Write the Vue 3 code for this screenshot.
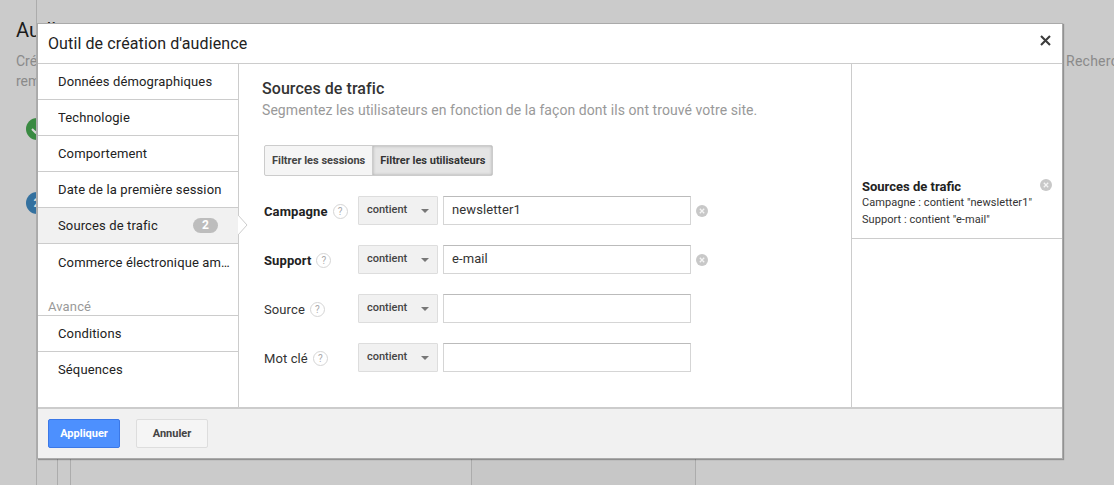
<script setup>
const menu = [
  { label: 'Données démographiques' },
  { label: 'Technologie' },
  { label: 'Comportement' },
  { label: 'Date de la première session' },
  { label: 'Sources de trafic', count: 2, active: true },
  { label: 'Commerce électronique amélioré' },
]
const advanced = ['Conditions', 'Séquences']
const rows = [
  { label: 'Campagne', value: 'newsletter1', bold: true, clear: true },
  { label: 'Support', value: 'e-mail', bold: true, clear: true },
  { label: 'Source', value: '' },
  { label: 'Mot clé', value: '' },
]
</script>

<template>
  <div class="page">
    <div class="backdrop">
      <h1 class="page-title">Audiences</h1>
      <p class="page-line">Créez des audiences <span class="far">Recherche</span></p>
      <p class="page-line second">remarketing</p>
      <div class="step green"><svg width="22" height="22" viewBox="0 0 22 22"><path d="M6 11l3.5 3.5L16 8" fill="none" stroke="#d8d8d8" stroke-width="2"/></svg></div>
      <div class="step blue">2</div>
      <div class="grid-lines">
        <i class="gl a"></i><i class="gl b"></i><i class="gl c"></i><i class="gl d"></i>
      </div>
    </div>

    <section class="modal">
      <header class="modal-head">
        <span class="modal-title">Outil de création d'audience</span>
        <svg class="close" width="11" height="11" viewBox="0 0 11 11"><path d="M1 1l9 9M10 1l-9 9" stroke="#3c3c3c" stroke-width="2.1" fill="none"/></svg>
      </header>

      <div class="modal-body">
        <nav class="side">
          <div v-for="m in menu" :key="m.label" class="side-item" :class="{ active: m.active }">
            <span class="side-label">{{ m.label }}</span>
            <span v-if="m.count" class="count">{{ m.count }}</span>
            <svg v-if="m.active" class="notch" width="10" height="20" viewBox="0 0 10 20"><path d="M0 0l9 10l-9 10z" fill="#fff"/><path d="M0 0l9 10l-9 10" fill="none" stroke="#ccc"/></svg>
          </div>
          <div class="side-heading">Avancé</div>
          <div v-for="a in advanced" :key="a" class="side-item adv">
            <span class="side-label">{{ a }}</span>
          </div>
        </nav>

        <main class="content">
          <h2 class="content-title">Sources de trafic</h2>
          <p class="content-sub">Segmentez les utilisateurs en fonction de la façon dont ils ont trouvé votre site.</p>

          <div class="toggle">
            <span class="tg">Filtrer les sessions</span>
            <span class="tg on">Filtrer les utilisateurs</span>
          </div>

          <div class="rows">
            <div v-for="r in rows" :key="r.label" class="row">
              <div class="row-label" :class="{ bold: r.bold }">
                <span>{{ r.label }}</span>
                <span class="help">?</span>
              </div>
              <div class="select"><span>contient</span><i class="caret"></i></div>
              <div class="input">{{ r.value }}</div>
              <svg v-if="r.clear" class="clear" width="12" height="12" viewBox="0 0 12 12"><circle cx="6" cy="6" r="6" fill="#c8c8c8"/><path d="M3.8 3.8l4.4 4.4M8.2 3.8l-4.4 4.4" stroke="#f4f4f4" stroke-width="1.3"/></svg>
            </div>
          </div>
        </main>

        <aside class="summary">
          <div class="sum-card">
            <div class="sum-title">Sources de trafic</div>
            <svg class="sum-clear" width="12" height="12" viewBox="0 0 12 12"><circle cx="6" cy="6" r="6" fill="#c8c8c8"/><path d="M3.8 3.8l4.4 4.4M8.2 3.8l-4.4 4.4" stroke="#f4f4f4" stroke-width="1.3"/></svg>
            <div class="sum-line">Campagne : contient "newsletter1"</div>
            <div class="sum-line">Support : contient "e-mail"</div>
          </div>
        </aside>
      </div>

      <footer class="modal-foot">
        <button class="btn primary">Appliquer</button>
        <button class="btn">Annuler</button>
      </footer>
    </section>
  </div>
</template>

<style>
html, body { margin: 0; background: #cbcbcb; overflow: hidden; }
</style>

<style scoped>
.page {
  position: relative;
  width: 1114px;
  height: 485px;
  overflow: hidden;
  background: #cbcbcb;
  font-family: Roboto, "Liberation Sans", sans-serif;
  color: #222;
}
.backdrop { padding: 18px 16px 0; }
.page-title { margin: 0; font-size: 20px; font-weight: 400; line-height: 24px; color: #1b1b1b; }
.page-line { margin: 9px 0 0; font-size: 14px; line-height: 20px; color: #8a8a8a; white-space: nowrap; position: relative; }
.page-line.second { margin-top: 0; }
.far { position: absolute; left: 1050px; top: 0; letter-spacing: .25px; }
.step { position: absolute; left: 26px; width: 22px; height: 22px; border-radius: 50%; color: #ddd; font-size: 12px; font-weight: 700; text-align: center; line-height: 22px; }
.green { top: 118px; background: #3a8a42; }
.blue { top: 192px; background: #34719f; }
.gl { position: absolute; top: 458px; bottom: 0; width: 1px; background: #acacac; }
.gl.a { left: 36px; top: 0; }
.gl.b { left: 57px; }
.gl.c { left: 70px; }
.gl.d { left: 471px; width: 223px; background: #c7c7c7; border-left: 1px solid #acacac; border-right: 1px solid #acacac; }

.modal {
  position: absolute;
  left: 38px;
  top: 24px;
  width: 1024px;
  height: 434px;
  background: #fff;
  box-shadow: 0 0 0 1px #aaa, 1px 1px 1px 1px rgba(0, 0, 0, .28);
  display: flex;
  flex-direction: column;
}
.modal-head {
  height: 40px;
  flex: none;
  box-sizing: border-box;
  display: flex;
  align-items: center;
  justify-content: space-between;
  padding: 0 11px 0 10px;
  border-bottom: 1px solid #ccc;
}
.modal-title { font-size: 16px; letter-spacing: .11px; color: #222; }
.close { margin-top: -7px; }
.modal-body { flex: 1; display: flex; min-height: 0; }

.side { width: 201px; flex: none; box-sizing: border-box; border-right: 1px solid #ccc; }
.side-item {
  position: relative;
  height: 36px;
  box-sizing: border-box;
  display: flex;
  align-items: center;
  padding: 0 7px 0 20px;
  border-bottom: 1px solid #ccc;
  font-size: 13px;
  letter-spacing: .13px;
  color: #222;
}
.side-item:nth-child(6) { border-bottom: 0; }
.side-item.adv:last-child { border-bottom-color: transparent; }
.side-item.active { background: #f1f1f1; }
.side-label { flex: 1; overflow: hidden; white-space: nowrap; text-overflow: ellipsis; }
.count { width: 25px; height: 15px; margin-right: 13px; border-radius: 8px; background: #bdbdbd; color: #fff; font-size: 12px; font-weight: 700; text-align: center; line-height: 15px; }
.notch { position: absolute; right: -10px; top: 7px; }
.side-heading { height: 21px; box-sizing: border-box; margin-top: 15px; padding: 4px 0 0 10px; font-size: 13px; letter-spacing: .13px; line-height: 16px; color: #999; border-bottom: 1px solid #ccc; }

.content { flex: 1; padding: 15px 23px 0; min-width: 0; }
.content-title { margin: 0; font-size: 16px; line-height: 20px; font-weight: 500; letter-spacing: .06px; color: #333; }
.content-sub { margin: 2px 0 0; font-size: 14px; line-height: 18px; letter-spacing: .065px; color: #999; }
.toggle { display: inline-flex; margin: 26px 0 0 2px; height: 31px; box-sizing: border-box; border: 1px solid #ccc; border-radius: 2px; background: #f5f5f5; }
.tg { padding: 0 7px; font-size: 11px; font-weight: 700; line-height: 29px; color: #444; }
.tg.on { background: #e4e4e4; box-shadow: inset 0 0 3px #aaa; color: #333; padding: 0 7px; border-left: 1px solid #ccc; }
.rows { margin-top: 20px; display: flex; flex-direction: column; gap: 20px; }
.row { display: flex; align-items: center; height: 29px; position: relative; }
.row-label { width: 94px; margin-left: 2px; padding-top: 2px; flex: none; display: flex; align-items: center; gap: 5px; font-size: 13px; letter-spacing: .1px; color: #333; }
.row-label.bold { font-weight: 700; color: #222; }
.help { width: 13px; height: 13px; border: 1px solid #d5d5d5; border-radius: 50%; font-size: 10px; font-weight: 400; line-height: 13px; text-align: center; color: #aaa; letter-spacing: 0; }
.select { width: 80px; height: 29px; box-sizing: border-box; border: 1px solid #ddd; background: #f1f1f1; display: flex; align-items: center; padding: 0 8px; justify-content: space-between; font-size: 11px; font-weight: 500; color: #444; border-radius: 1px; margin-right: 5px; }
.select span { margin-top: -3px; }
.caret { width: 0; height: 0; border: 4px solid transparent; border-top-color: #777; border-bottom: 0; }
.input { width: 248px; height: 29px; box-sizing: border-box; border: 1px solid #d5d5d5; border-top-color: #bbb; padding: 0 8px; font-size: 13px; letter-spacing: .1px; line-height: 26px; color: #333; }
.clear { margin-left: 5px; }

.summary { width: 211px; flex: none; box-sizing: border-box; border-left: 1px solid #ccc; padding-top: 106px; }
.sum-card { position: relative; padding: 9px 10px 8px; height: 69px; box-sizing: border-box; border-bottom: 1px solid #ccc; }
.sum-title { font-size: 13px; font-weight: 700; color: #222; line-height: 16px; margin-bottom: -1px; }
.sum-clear { position: absolute; right: 10px; top: 9px; }
.sum-line { font-size: 11px; line-height: 17px; letter-spacing: .06px; color: #333; }

.modal-foot { height: 51px; flex: none; box-sizing: border-box; background: #f1f1f1; border-top: 2px solid #ccc; display: flex; align-items: center; gap: 16px; padding: 0 10px; }
.btn { width: 72px; height: 29px; box-sizing: border-box; border: 1px solid #ddd; border-radius: 2px; background: #f5f5f5; font-family: inherit; font-size: 11px; font-weight: 700; color: #444; padding: 0; }
.btn.primary { background: #4d90fe; border-color: #3b78e7; color: #fff; }
</style>
